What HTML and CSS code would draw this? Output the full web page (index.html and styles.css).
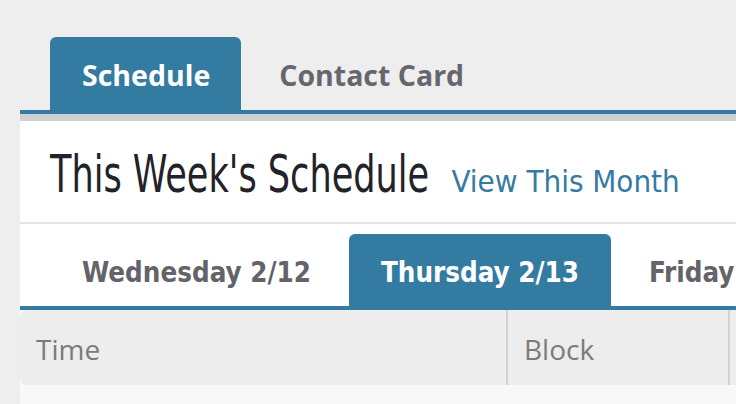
FILE: index.html
```html
<!DOCTYPE html>
<html lang="en">
<head>
    <meta charset="UTF-8">
    <title>Schedule</title>
    <link rel="stylesheet" href="styles.css">
</head>
<body>

<div class="page">
    <!-- main tabs -->
    <nav class="main-tabs">
        <a class="main-tab active">Schedule</a>
        <a class="main-tab">Contact Card</a>
    </nav>

    <div class="card">
        <div class="card-head">
            <h1 class="card-title">This Week's Schedule</h1>
            <a class="month-link">View This Month</a>
        </div>

        <!-- day tabs -->
        <nav class="day-tabs">
            <a class="day-tab">Wednesday 2/12</a>
            <a class="day-tab active">Thursday 2/13</a>
            <a class="day-tab">Friday 2/14</a>
        </nav>

        <div class="table-head">
            <div class="col col-time">Time</div>
            <div class="col col-block">Block</div>
            <div class="col col-class">Class</div>
        </div>
        <div class="table-body"></div>
    </div>
</div>

</body>
</html>
```

FILE: styles.css
```css
body {
    margin: 0;
    background-color: #eeeeee;
    font-family: "Open Sans", sans-serif;
    overflow: hidden;
}

.page {
    width: 1100px;
    padding-left: 20px;
}

.main-tabs {
    display: flex;
    gap: 6px;
    padding: 37px 0 0 30px;
    border-bottom: 4px solid #347ba2;
}

.main-tab {
    height: 73px;
    line-height: 76px;
    padding: 0 31px 0 32px;
    border-radius: 6px 6px 0 0;
    font-size: 28.5px;
    font-weight: bold;
    color: #66666e;
}

.main-tab.active {
    background-color: #347ba2;
    color: #ffffff;
}

.card {
    background-color: #ffffff;
    border-top: 7px solid #cfd0d4;
}

.card-head {
    display: flex;
    align-items: baseline;
    height: 74px;
    padding: 27px 0 0 30px;
    border-bottom: 2px solid #e3e3e3;
}

/* headline font is narrower than anything installed */
.card-title {
    margin: 0 -126px 0 0;
    line-height: 1;
    font-family: "DejaVu Sans Condensed", sans-serif;
    font-size: 52px;
    font-weight: normal;
    color: #222228;
    transform: scaleX(0.75);
    transform-origin: left;
}

.month-link {
    margin-left: 22px;
    line-height: 1;
    font-family: "DejaVu Sans Condensed", sans-serif;
    font-size: 31px;
    color: #347ba2;
}

.day-tabs {
    display: flex;
    gap: 6px;
    padding: 10px 0 0 30px;
    border-bottom: 4px solid #347ba2;
}

.day-tab {
    height: 72px;
    line-height: 76px;
    padding: 0 32px;
    border-radius: 6px 6px 0 0;
    font-family: "DejaVu Sans Condensed", sans-serif;
    font-size: 27.5px;
    font-weight: bold;
    color: #636369;
}

.day-tab.active {
    background-color: #347ba2;
    color: #ffffff;
}

.table-head {
    display: flex;
    height: 75px;
    background-color: #ededed;
    border-radius: 6px 0 0 6px;
}

.col {
    padding-left: 16px;
    line-height: 78px;
    font-size: 28px;
    color: #7b7b7b;
}

.col-time {
    width: 470px;
    border-right: 2px solid #d2d2d2;
}

.col-block {
    width: 204px;
    border-right: 2px solid #d2d2d2;
}

.table-body {
    height: 60px;
    background-color: #f8f8f8;
}
```
